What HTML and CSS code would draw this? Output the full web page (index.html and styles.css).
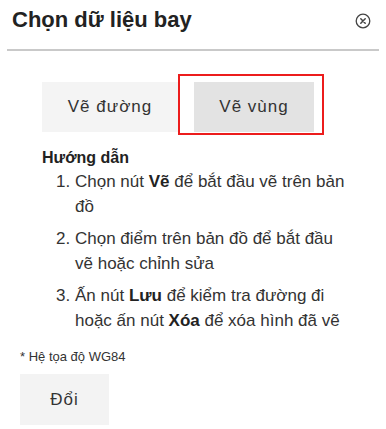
FILE: index.html
```html
<!DOCTYPE html>
<html lang="vi">
<head>
    <meta charset="UTF-8">
    <meta name="viewport" content="width=device-width, initial-scale=1.0">
    <title>Chọn dữ liệu bay</title>
    <link rel="stylesheet" href="styles.css">
</head>
<body>

    <div class="panel">
        <div class="panel-header">
            <h1>Chọn dữ liệu bay</h1>
            <button class="close-btn" aria-label="Đóng">
                <svg width="16" height="16" viewBox="0 0 16 16">
                    <circle cx="8" cy="8" r="6.8" fill="none" stroke="#444" stroke-width="1.3"/>
                    <path d="M5.8 5.8 L10.2 10.2 M10.2 5.8 L5.8 10.2" stroke="#444" stroke-width="1.5" stroke-linecap="round"/>
                </svg>
            </button>
        </div>

        <div class="draw-tools">
            <button class="tool-btn">Vẽ đường</button>
            <div class="tool-selected">
                <button class="tool-btn active">Vẽ vùng</button>
            </div>
        </div>

        <div class="guide">
            <h2>Hướng dẫn</h2>
            <ol>
                <li>Chọn nút <b>Vẽ</b> để bắt đầu vẽ trên bản đồ</li>
                <li>Chọn điểm trên bản đồ để bắt đầu vẽ hoặc chỉnh sửa</li>
                <li>Ấn nút <b>Lưu</b> để kiểm tra đường đi hoặc ấn nút <b>Xóa</b> để xóa hình đã vẽ</li>
            </ol>
        </div>

        <p class="coord-note">* Hệ tọa độ WG84</p>
        <button class="swap-btn">Đổi</button>
    </div>

</body>
</html>
```

FILE: styles.css
```css
body {
    margin: 0;
    font-family: Arial, "Liberation Sans", sans-serif;
    background: #fff;
    color: #333;
}

.panel {
    width: 386px;
}

.panel-header {
    display: flex;
    justify-content: space-between;
    align-items: center;
    margin: 0 7px;
    padding: 7px 8px 17px 5px;
    border-bottom: 2px solid #c9c9c9;
}

.panel-header h1 {
    margin: 0;
    font-size: 22px;
    line-height: 25px;
    font-weight: bold;
    color: #222;
}

.close-btn {
    background: none;
    border: none;
    padding: 0;
    margin-top: 3px;
    width: 16px;
    height: 16px;
    cursor: pointer;
}

.draw-tools {
    display: flex;
    align-items: flex-start;
    margin-top: 31px;
    padding-left: 42px;
}

.tool-btn {
    height: 50px;
    width: 136px;
    border: none;
    background: #f4f4f4;
    font-family: Arial, "Liberation Sans", sans-serif;
    font-size: 17px;
    letter-spacing: 1px;
    color: #333;
    cursor: pointer;
}

.tool-btn.active {
    width: 120px;
    background: #e3e3e3;
}

.tool-selected {
    margin-top: -8px;
    padding: 6px 8px 1px 14px;
    border: 2px solid #ec1c1c;
}

.guide {
    padding-left: 42px;
    margin-top: 11px;
}

.guide h2 {
    margin: 0;
    font-size: 16px;
    font-weight: bold;
    color: #222;
    line-height: 24px;
}

.guide ol {
    margin: 0;
    padding-left: 33px;
    width: 273px;
    font-size: 17px;
    line-height: 24.5px;
}

.guide li {
    margin-bottom: 8px;
}

.guide b {
    color: #222;
}

.coord-note {
    margin: 16px 0 10px 20px;
    font-size: 13px;
    line-height: 15px;
    color: #333;
}

.swap-btn {
    margin-left: 20px;
    width: 89px;
    height: 51px;
    border: none;
    background: #f3f3f3;
    font-family: Arial, "Liberation Sans", sans-serif;
    font-size: 17px;
    letter-spacing: 1px;
    color: #333;
    cursor: pointer;
}
```
